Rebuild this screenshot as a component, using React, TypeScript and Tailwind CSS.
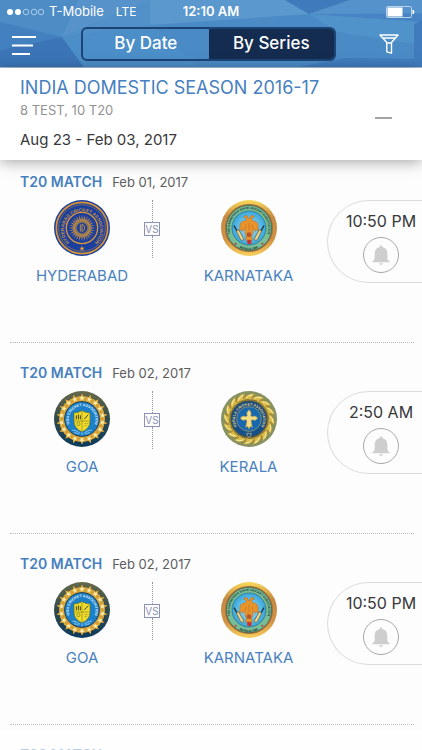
import { useId, useState } from "react";

type TeamName = "HYDERABAD" | "KARNATAKA" | "GOA" | "KERALA";

type Match = {
  id: number;
  type: string;
  date: string;
  home: TeamName;
  away: TeamName;
  time: string;
};

const matches: Match[] = [
  { id: 1, type: "T20 MATCH", date: "Feb 01, 2017", home: "HYDERABAD", away: "KARNATAKA", time: "10:50 PM" },
  { id: 2, type: "T20 MATCH", date: "Feb 02, 2017", home: "GOA", away: "KERALA", time: "2:50 AM" },
  { id: 3, type: "T20 MATCH", date: "Feb 02, 2017", home: "GOA", away: "KARNATAKA", time: "10:50 PM" },
  { id: 4, type: "T20 MATCH", date: "Feb 03, 2017", home: "KERALA", away: "HYDERABAD", time: "10:50 PM" },
];

const spokes = (count: number) => Array.from({ length: count }, (_, i) => (i * 360) / count);

function HyderabadLogo() {
  const id = useId();
  return (
    <svg viewBox="0 0 168 168" className="size-14" aria-hidden="true">
      <circle cx="84" cy="84" r="84" fill="#1b3f9c" />
      <circle cx="84" cy="84" r="77" fill="none" stroke="#d9953a" strokeWidth="5" />
      <circle cx="84" cy="84" r="70" fill="none" stroke="#a07a50" strokeWidth="2" />
      <circle cx="84" cy="84" r="47" fill="none" stroke="#d9953a" strokeWidth="4" />
      <path id={id} d="M48 129 A54 54 0 1 1 120 129" fill="none" />
      <text fontSize="14" fontWeight="700" fill="#c58e48" fontFamily="Liberation Sans, sans-serif">
        <textPath href={`#${id}`} startOffset="50%" textAnchor="middle">HYDERABAD CRICKET ASSOCIATION</textPath>
      </text>
      {spokes(28).map((a) => (
        <path key={a} d="M84 44 L87 62 L84 70 L81 62 Z" fill="#bd8a48" transform={`rotate(${a} 84 84)`} />
      ))}
      <circle cx="84" cy="84" r="19" fill="none" stroke="#8d7656" strokeWidth="4" />
      <path d="M79 73 v22 M84 73 q9 2 8 12 q-2 9 -8 9 Z" fill="none" stroke="#bd8a48" strokeWidth="3" />
      <path d="M84 137 l2 6 h6 l-5 4 2 6 -5 -4 -5 4 2 -6 -5 -4 h6 Z" fill="#e8a03a" />
    </svg>
  );
}

function KarnatakaLogo() {
  const id = useId();
  return (
    <svg viewBox="0 0 168 168" className="size-14" aria-hidden="true">
      <defs>
        <linearGradient id={`${id}g`} x1="0" y1="0" x2="0" y2="1">
          <stop offset="0" stopColor="#f9da5a" />
          <stop offset=".3" stopColor="#c58b45" />
          <stop offset=".7" stopColor="#cf9145" />
          <stop offset="1" stopColor="#f8d05c" />
        </linearGradient>
        <radialGradient id={`${id}b`}>
          <stop offset="0" stopColor="#a6e2f7" />
          <stop offset="1" stopColor="#36a6dc" />
        </radialGradient>
      </defs>
      <circle cx="84" cy="84" r="84" fill={`url(#${id}g)`} />
      <circle cx="84" cy="84" r="72" fill="#a86f35" />
      <circle cx="84" cy="84" r="68" fill="#76bd98" stroke="#3d5a4a" strokeWidth="2" />
      <circle cx="84" cy="84" r="51" fill={`url(#${id}b)`} stroke="#2c6878" strokeWidth="2" />
      <path id={id} d="M41 124 A58 58 0 1 1 127 124" fill="none" />
      <path id={`${id}l`} d="M36 128 A64 64 0 0 0 132 128" fill="none" />
      <text fontSize="9" fontWeight="700" fill="#16332b" fontFamily="Liberation Sans, sans-serif">
        <textPath href={`#${id}`} startOffset="50%" textAnchor="middle">THE KARNATAKA STATE CRICKET ASSOCIATION</textPath>
      </text>
      <text fontSize="9" fontWeight="700" fill="#16332b" fontFamily="Liberation Sans, sans-serif">
        <textPath href={`#${id}l`} startOffset="50%" textAnchor="middle">BANGALORE</textPath>
      </text>
      <circle cx="44" cy="131" r="3" fill="#c33628" />
      <circle cx="124" cy="131" r="3" fill="#c33628" />
      {/* two headed bird */}
      <path d="M82 56 q-1 -10 -10 -10 l-4 6 6 1 q3 8 -1 10 q-13 -1 -16 11 l-1 20 6 -5 3 5 4 -8 3 7 q-1 10 4 14 l-2 14 h20 l-2 -14 q5 -4 4 -14 l3 -7 4 8 3 -5 6 5 -1 -20 q-3 -12 -16 -11 q-4 -2 -1 -10 l6 -1 -4 -6 q-9 0 -10 10 Z" fill="#e8932c" stroke="#b5681f" strokeWidth="1.5" />
      <path d="M74 74 v12 M84 68 v24 M94 74 v12" stroke="#bf6d20" strokeWidth="1.5" />
      <circle cx="84" cy="104" r="7" fill="#b5532b" />
      <circle cx="85" cy="126" r="7" fill="#d2302a" />
      <path d="M39 77 L50 96" stroke="#26303a" strokeWidth="4" />
      <path d="M129 77 L118 96" stroke="#26303a" strokeWidth="4" />
      <path d="M46 93 l7 -4 15 27 -4 6 -5 -3 Z" fill="#f0d489" stroke="#5c5331" strokeWidth="2" />
      <path d="M122 93 l-7 -4 -15 27 4 6 5 -3 Z" fill="#f0d489" stroke="#5c5331" strokeWidth="2" />
    </svg>
  );
}

function GoaLogo() {
  const id = useId();
  return (
    <svg viewBox="0 0 168 168" className="size-14" aria-hidden="true">
      <defs>
        <linearGradient id={`${id}g`} x1="0" y1="0" x2="0" y2="1">
          <stop offset="0" stopColor="#66694a" />
          <stop offset=".5" stopColor="#2f4a4c" />
          <stop offset="1" stopColor="#0b3a5e" />
        </linearGradient>
      </defs>
      <circle cx="84" cy="84" r="84" fill={`url(#${id}g)`} />
      <circle cx="84" cy="84" r="59" fill="none" stroke="#d3a03a" strokeWidth="15" />
      {spokes(18).map((a) => (
        <path
          key={a}
          d="M84 10 l3 7 8 1 -6 5 2 8 -7 -4 -7 4 2 -8 -6 -5 8 -1 Z"
          fill="#fbeeb4"
          stroke="#dba637"
          strokeWidth="3"
          transform={`rotate(${a} 84 84)`}
        />
      ))}
      <circle cx="84" cy="84" r="52" fill="#1b80c8" stroke="#1d3f57" strokeWidth="3" />
      <path id={id} d="M54 112 A40 40 0 1 1 114 112" fill="none" />
      <text fontSize="11" fontWeight="700" fill="#e4f3fb" fontFamily="Liberation Sans, sans-serif">
        <textPath href={`#${id}`} startOffset="50%" textAnchor="middle">GOA CRICKET ASSOCIATION</textPath>
      </text>
      <path d="M60 66 q12 0 24 -7 q12 7 24 7 v24 q0 23 -24 32 q-24 -9 -24 -32 Z" fill="#f2dc2b" stroke="#6a7424" strokeWidth="2" />
      <path d="M84 61 v58 M61 90 h46" stroke="#8a8722" strokeWidth="2" />
      <path d="M67 73 v12 M73 70 v15 M79 73 v12 M91 84 l12 -13" stroke="#3c4520" strokeWidth="3" />
      <circle cx="73" cy="99" r="5" fill="none" stroke="#6f7624" strokeWidth="2" />
      <path d="M91 98 h12 M91 104 h8" stroke="#a39924" strokeWidth="2" />
      <path d="M55 117 q14 1 23 10 M60 125 q9 1 14 5 M113 117 q-14 1 -23 10 M108 125 q-9 1 -14 5 M84 124 v9" stroke="#8cc9ee" strokeWidth="3" fill="none" />
    </svg>
  );
}

function KeralaLogo() {
  const id = useId();
  return (
    <svg viewBox="0 0 168 168" className="size-14" aria-hidden="true">
      <circle cx="84" cy="84" r="84" fill="#87905f" />
      <circle cx="84" cy="84" r="64" fill="none" stroke="#a98f3c" strokeWidth="16" />
      {spokes(16).map((a) => (
        <g key={a} transform={`rotate(${a} 84 84)`}>
          <path d="M68 27 Q80 4 102 9 Q89 15 91 27 Q80 21 68 27 Z" fill="#dcbd4c" />
          <path d="M76 20 Q83 11 95 12" fill="none" stroke="#f7eb9c" strokeWidth="3" />
          <path d="M92 28 Q84 22 70 28" fill="none" stroke="#7d6c2c" strokeWidth="2" />
        </g>
      ))}
      <circle cx="84" cy="84" r="54" fill="#174f8b" stroke="#494b36" strokeWidth="3" />
      <path id={id} d="M55 116 A42 42 0 1 1 113 116" fill="none" />
      <text fontSize="11" fontWeight="700" fill="#e2cf7c" fontFamily="Liberation Sans, sans-serif">
        <textPath href={`#${id}`} startOffset="50%" textAnchor="middle">KERALA CRICKET ASSOCIATION</textPath>
      </text>
      <circle cx="84" cy="84" r="37" fill="#1768ae" stroke="#b0a765" strokeWidth="2" />
      <path d="M84 56 q10 10 5 18 l5 3 q8 -6 16 4 q-6 11 -16 5 l-4 3 4 20 -6 -3 -4 8 -4 -8 -6 3 4 -20 -4 -3 q-10 6 -16 -5 q8 -10 16 -4 l5 -3 q-5 -8 5 -18 Z" fill="#f3dd85" stroke="#b79b4b" strokeWidth="2" />
      <path d="M77 127 h14 l-2 8 -5 4 -5 -4 Z" fill="#174f8b" stroke="#d8c36a" strokeWidth="2" />
    </svg>
  );
}

const logos = {
  HYDERABAD: HyderabadLogo,
  KARNATAKA: KarnatakaLogo,
  GOA: GoaLogo,
  KERALA: KeralaLogo,
};

function HeaderBackground() {
  return (
    <svg viewBox="0 0 422 67" preserveAspectRatio="none" className="absolute inset-0 size-full" aria-hidden="true">
      <rect width="422" height="67" fill="#4a8bc6" />
      <path d="M0 0 H78 L62 37 L0 22 Z" fill="#4e8cc5" />
      <path d="M78 0 H150 L62 37 Z" fill="#5793ca" />
      <path d="M0 22 L62 37 L0 50 Z" fill="#4380bf" />
      <path d="M0 50 L62 37 L84 67 H0 Z" fill="#3b75b7" />
      <path d="M62 37 L150 25 L200 67 H84 Z" fill="#4b8ec8" />
      <path d="M150 0 H285 L309 14 L150 25 Z" fill="#5b98ce" />
      <path d="M62 37 L150 0 V25 Z" fill="#5190c8" />
      <path d="M285 0 H350 L309 14 Z" fill="#3f7abc" />
      <path d="M350 0 H422 V13 L309 14 Z" fill="#5591ca" />
      <path d="M309 14 H422 V22 Z" fill="#4784c3" />
      <path d="M309 14 L422 22 V45 L336 32 Z" fill="#5092ca" />
      <path d="M309 14 L336 32 L412 59 L336 58 Z" fill="#4a8bc6" />
      <path d="M300 67 L345 58 L414 59 L422 67 Z" fill="#407dbe" />
      <path d="M414 24 L422 20 V67 L414 59 Z" fill="#407cbd" />
    </svg>
  );
}

function StatusBar() {
  return (
    <div className="relative grid h-6 grid-cols-[1fr_auto_1fr] items-center px-[7px] text-[13px] text-white">
      <div className="flex items-center">
        <svg viewBox="0 0 38 8" className="mr-1 h-2 w-[38px]" aria-hidden="true">
          <circle cx="3" cy="4" r="3" fill="#fff" />
          <circle cx="11" cy="4" r="3" fill="#fff" />
          {[19, 27, 34].map((x) => (
            <circle key={x} cx={x} cy="4" r="2.8" fill="none" stroke="#c4dbef" strokeWidth=".8" />
          ))}
        </svg>
        <span>T-Mobile</span>
        <span className="ml-3 text-xs">LTE</span>
      </div>
      <span className="font-semibold">12:10 AM</span>
      <svg viewBox="0 0 29 12" className="h-3 w-[29px] justify-self-end" aria-hidden="true">
        <rect x=".5" y=".5" width="25" height="11" rx="1.5" fill="none" stroke="#b9d3eb" />
        <rect x="1.5" y="1.5" width="15" height="9" fill="#fff" />
        <path d="M27 4 q2 2 0 4 Z" fill="#fff" stroke="#fff" />
      </svg>
    </div>
  );
}

function Team({ name }: { name: TeamName }) {
  const Logo = logos[name];
  return (
    <div className="flex flex-col items-center">
      <Logo />
      <span className="mt-2 text-[15px] leading-6 text-[#4a82c0]">{name}</span>
    </div>
  );
}

function MatchRow({ match }: { match: Match }) {
  return (
    <li className="pt-5 first:pt-3">
      <div className="flex items-center gap-[10px] pl-5 leading-5">
        <h2 className="text-sm leading-5 font-semibold text-[#4680c0]">{match.type}</h2>
        <span className="text-[13px] text-[#5c5c5e]">{match.date}</span>
      </div>

      <div className="mt-2 grid grid-cols-[124px_16px_1fr_95px] pl-5">
        <Team name={match.home} />

        <div className="flex h-[58px] flex-col items-center">
          <span className="flex-1 border-l border-dotted border-[#8d92b5]" />
          <span className="flex h-[14px] w-4 items-center justify-center border border-[#8d92b5] text-[10px] leading-3 text-[#8d92b5]">
            VS
          </span>
          <span className="flex-1 border-l border-dotted border-[#8d92b5]" />
        </div>

        <div className="pl-[10px]">
          <Team name={match.away} />
        </div>

        <div className="flex h-[83px] flex-col items-center rounded-l-full border border-r-0 border-[#dcdcde] pt-2 pl-3">
          <time className="text-base leading-6 whitespace-nowrap text-[#38383a]">{match.time}</time>
          <button
            type="button"
            aria-label="Set reminder"
            className="mt-1 flex size-9 items-center justify-center rounded-full border border-[#a8a8aa]"
          >
            <svg viewBox="0 0 54 60" className="h-5 w-[18px]" fill="#cecece" aria-hidden="true">
              <path d="M23 6 q0 -5 4 -5 t4 5 q15 4 15 20 v14 q1 7 7 9 v3 H1 v-3 q6 -2 7 -9 V26 Q8 10 23 6 Z" />
              <path d="M21 55 h12 q-2 5 -6 5 t-6 -5 Z" />
            </svg>
          </button>
        </div>
      </div>

      <hr className="mt-[54px] mr-2 ml-[10px] border-dotted border-[#b9bcc6]" />
    </li>
  );
}

export default function App() {
  const [view, setView] = useState("series");
  const [open, setOpen] = useState(true);

  const tabClass = (active: boolean) =>
    active ? "flex-1 bg-[#132c50] text-[17px]" : "flex-1 text-[17px]";

  return (
    <div className="relative flex h-screen flex-col overflow-hidden bg-[#fdfdfd] font-['Inter',sans-serif]">
      <header className="relative border-b border-[#a9bfda]">
        <HeaderBackground />
        <StatusBar />
        <nav className="relative flex h-[43px] items-start justify-between pt-[3px] pr-[23px] pl-3 text-white">
          <button type="button" aria-label="Menu" className="flex h-9 w-6 items-center">
            <svg viewBox="0 0 24 20" className="h-5 w-6" stroke="#fff" strokeWidth="2" aria-hidden="true">
              <path d="M0 2 h24 M0 10.5 h21 M0 19 h18" />
            </svg>
          </button>

          <div className="mr-[43px] ml-[45px] flex h-[34px] flex-1 overflow-hidden rounded-md border-2 border-[#1b4475] font-medium">
            <button type="button" className={tabClass(view === "date")} onClick={() => setView("date")}>
              By Date
            </button>
            <button type="button" className={tabClass(view === "series")} onClick={() => setView("series")}>
              By Series
            </button>
          </div>

          <button type="button" aria-label="Filter" className="flex h-[34px] w-5 items-center">
            <svg viewBox="0 0 20 20" className="size-5" fill="none" stroke="#fff" strokeWidth="1.4" strokeLinejoin="round" aria-hidden="true">
              <path d="M1 1 H19 L12.5 8.5 V19.2 L7.8 17.8 V8.5 Z M3.5 4 H16.5 M7.8 9 H12.5" />
            </svg>
          </button>
        </nav>
      </header>

      <section className="relative z-10 flex items-center justify-between bg-white pt-2 pr-[30px] pb-2 pl-5 shadow-[0_2px_14px_rgba(0,0,0,0.35)]">
        <div>
          <h1 className="text-lg leading-6 text-[#4680c0]">INDIA DOMESTIC SEASON 2016-17</h1>
          <p className="text-[13px] leading-5 text-[#929294]">8 TEST, 10 T20</p>
          <p className="mt-2 text-[15px] leading-6 text-[#38383a]">Aug 23 - Feb 03, 2017</p>
        </div>
        <button type="button" aria-label="Collapse series" className="flex h-6 items-center pt-2" onClick={() => setOpen(!open)}>
          <span className="h-[2px] w-[17px] bg-[#a4a4a4]" />
        </button>
      </section>

      <main className="min-h-0 flex-1 overflow-y-auto [scrollbar-width:none]">
        {open && (
          <ul>
            {matches.map((match) => (
              <MatchRow key={match.id} match={match} />
            ))}
          </ul>
        )}
      </main>

      <div className="pointer-events-none absolute inset-x-0 bottom-0 h-5 bg-white/60" />
    </div>
  );
}
